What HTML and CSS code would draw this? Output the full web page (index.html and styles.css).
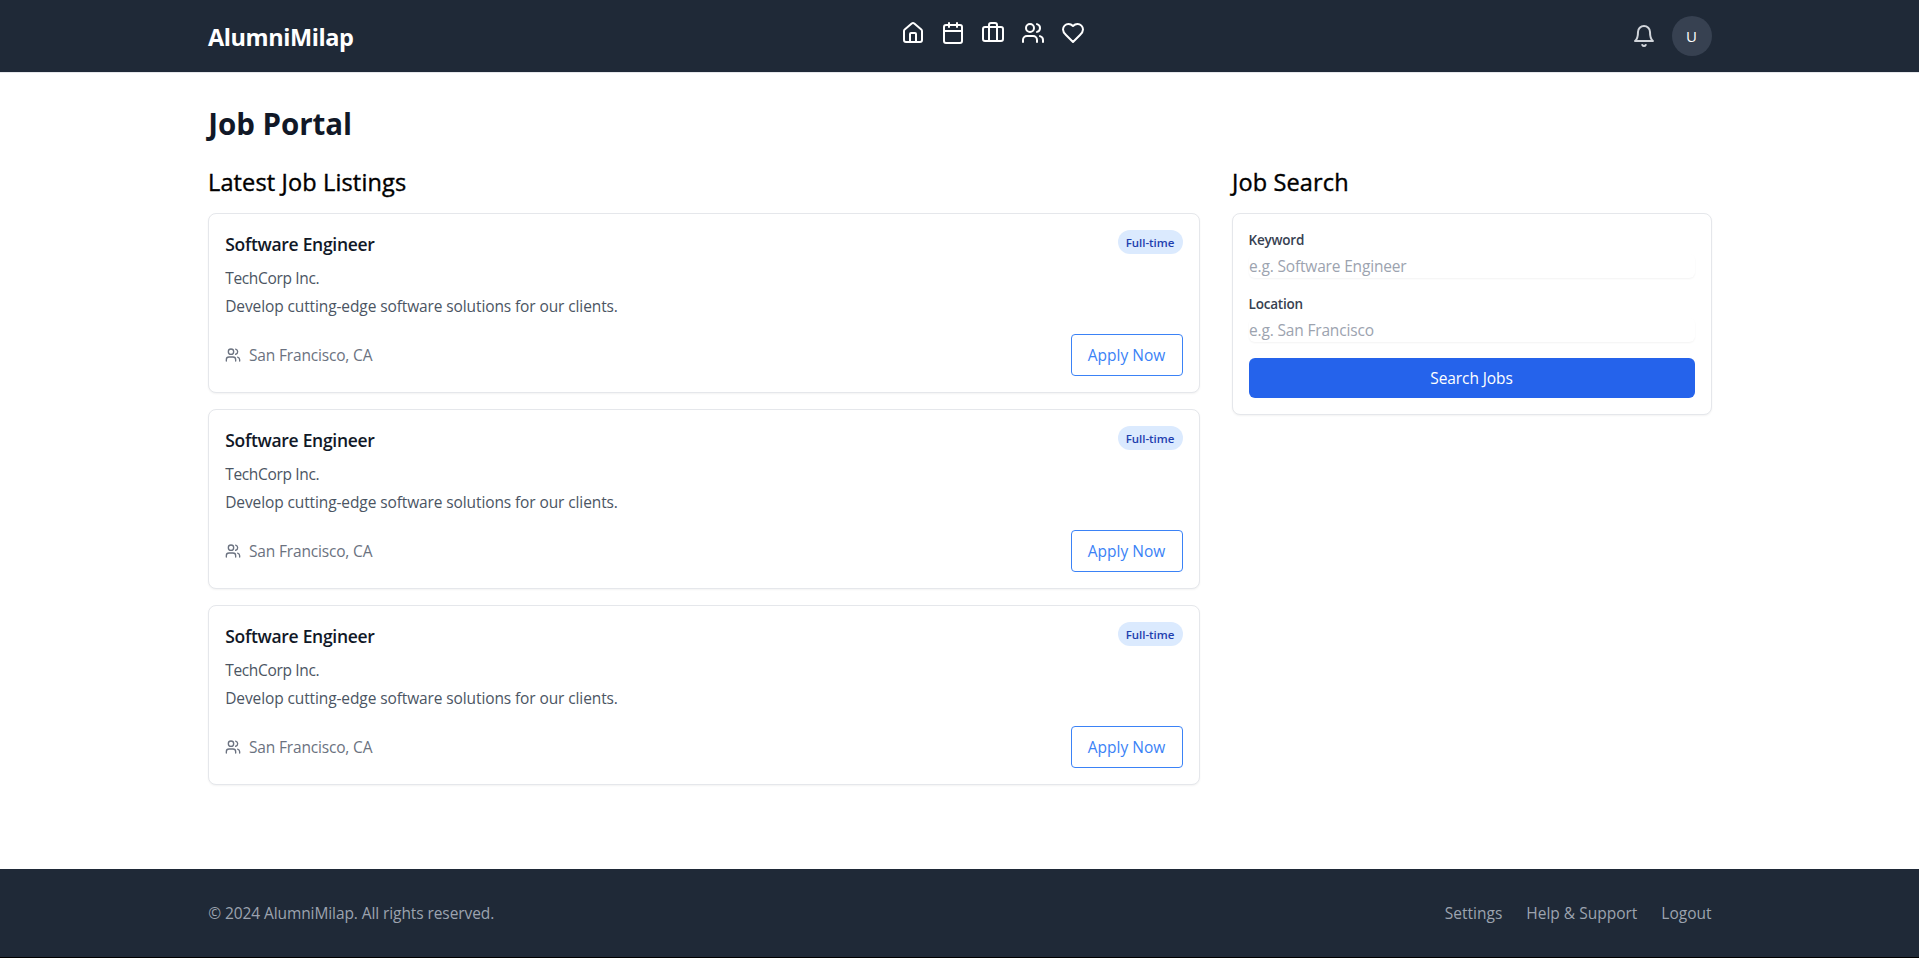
FILE: index.html
```html
<!DOCTYPE html>
<html lang="en">
<head>
<meta charset="utf-8">
<title>AlumniMilap – Job Portal</title>
<link rel="stylesheet" href="styles.css">
</head>
<body>
<svg class="sprite" aria-hidden="true">
  <symbol id="home" viewBox="0 0 24 24"><path d="M15 21v-8a1 1 0 0 0-1-1h-4a1 1 0 0 0-1 1v8"/><path d="M3 10a2 2 0 0 1 .709-1.528l7-5.999a2 2 0 0 1 2.582 0l7 5.999A2 2 0 0 1 21 10v9a2 2 0 0 1-2 2H5a2 2 0 0 1-2-2z"/></symbol>
  <symbol id="calendar" viewBox="0 0 24 24"><path d="M8 2v4M16 2v4M3 10h18"/><rect width="18" height="18" x="3" y="4" rx="2"/></symbol>
  <symbol id="briefcase" viewBox="0 0 24 24"><path d="M16 20V4a2 2 0 0 0-2-2h-4a2 2 0 0 0-2 2v16"/><rect width="20" height="14" x="2" y="6" rx="2"/></symbol>
  <symbol id="users" viewBox="0 0 24 24"><path d="M16 21v-2a4 4 0 0 0-4-4H6a4 4 0 0 0-4 4v2"/><circle cx="9" cy="7" r="4"/><path d="M22 21v-2a4 4 0 0 0-3-3.87M16 3.13a4 4 0 0 1 0 7.75"/></symbol>
  <symbol id="heart" viewBox="0 0 24 24"><path d="M19 14c1.49-1.46 3-3.21 3-5.5A5.5 5.5 0 0 0 16.5 3c-1.76 0-3 .5-4.5 2-1.5-1.5-2.74-2-4.5-2A5.5 5.5 0 0 0 2 8.5c0 2.3 1.5 4.05 3 5.5l7 7Z"/></symbol>
  <symbol id="bell" viewBox="0 0 24 24"><path d="M6 8a6 6 0 0 1 12 0c0 7 3 9 3 9H3s3-2 3-9"/><path d="M10.3 21a1.94 1.94 0 0 0 3.4 0"/></symbol>
</svg>
<header class="header">
  <div class="container header-row">
    <a class="brand">AlumniMilap</a>
    <nav class="nav">
      <a><svg class="icon"><use href="#home"/></svg></a>
      <a><svg class="icon"><use href="#calendar"/></svg></a>
      <a><svg class="icon"><use href="#briefcase"/></svg></a>
      <a><svg class="icon"><use href="#users"/></svg></a>
      <a><svg class="icon"><use href="#heart"/></svg></a>
    </nav>
    <div class="account">
      <svg class="icon bell"><use href="#bell"/></svg>
      <span class="avatar">U</span>
    </div>
  </div>
</header>
<main class="container main">
  <h1 class="page-title">Job Portal</h1>
  <div class="columns">
    <section class="listings">
      <h2 class="section-title">Latest Job Listings</h2>
      <div class="job-list">
        <article class="card">
          <div class="card-head"><h3 class="job-title">Software Engineer</h3><span class="badge">Full-time</span></div>
          <p class="company">TechCorp Inc.</p>
          <p class="description">Develop cutting-edge software solutions for our clients.</p>
          <div class="card-foot"><span class="location"><svg class="icon small"><use href="#users"/></svg><span>San Francisco, CA</span></span><button class="apply">Apply Now</button></div>
        </article>
        <article class="card">
          <div class="card-head"><h3 class="job-title">Software Engineer</h3><span class="badge">Full-time</span></div>
          <p class="company">TechCorp Inc.</p>
          <p class="description">Develop cutting-edge software solutions for our clients.</p>
          <div class="card-foot"><span class="location"><svg class="icon small"><use href="#users"/></svg><span>San Francisco, CA</span></span><button class="apply">Apply Now</button></div>
        </article>
        <article class="card">
          <div class="card-head"><h3 class="job-title">Software Engineer</h3><span class="badge">Full-time</span></div>
          <p class="company">TechCorp Inc.</p>
          <p class="description">Develop cutting-edge software solutions for our clients.</p>
          <div class="card-foot"><span class="location"><svg class="icon small"><use href="#users"/></svg><span>San Francisco, CA</span></span><button class="apply">Apply Now</button></div>
        </article>
      </div>
    </section>
    <aside>
      <h2 class="section-title search-title">Job Search</h2>
      <form class="card search">
        <div class="field"><label class="label" for="keyword">Keyword</label><input class="input" id="keyword" placeholder="e.g. Software Engineer"></div>
        <div class="field"><label class="label" for="place">Location</label><input class="input" id="place" placeholder="e.g. San Francisco"></div>
        <button class="submit" type="button">Search Jobs</button>
      </form>
    </aside>
  </div>
</main>
<footer class="footer">
  <div class="container footer-row">
    <p class="copyright">© 2024 AlumniMilap. All rights reserved.</p>
    <div class="links"><a>Settings</a><a>Help &amp; Support</a><a>Logout</a></div>
  </div>
</footer>
</body>
</html>
```
FILE: styles.css
```css
* { box-sizing: border-box; margin: 0; padding: 0; }
body {
  min-height: 958px;
  display: flex;
  flex-direction: column;
  background: #fff;
  color: #000;
  font: 400 15.5px/24px "Open Sans", "Noto Sans", sans-serif;
  letter-spacing: -0.2px;
  border-bottom: 1px solid #000;
}
button, input { font: inherit; letter-spacing: inherit; border: 0; background: none; }
.sprite { position: absolute; width: 0; height: 0; }
.container { width: 1504px; margin: 0 auto; }
.icon {
  display: block; width: 24px; height: 24px; flex: none;
  fill: none; stroke: currentColor; stroke-width: 2; stroke-linecap: round; stroke-linejoin: round;
}

.header { height: 73px; background: #1f2937; border-bottom: 1px solid #e5e7eb; color: #fff; }
.header-row { height: 72px; display: flex; align-items: center; justify-content: space-between; }
.brand { width: 146px; white-space: nowrap; font-size: 23.5px; line-height: 32px; font-weight: 700; letter-spacing: -0.42px; padding-top: 2px; text-indent: 0.5px; }
.nav { display: flex; gap: 16px; padding-bottom: 6px; }
.account { display: flex; align-items: center; gap: 16px; }
.bell { color: #d1d5db; }
.avatar { width: 40px; height: 40px; border-radius: 50%; background: #374151; display: flex; align-items: center; justify-content: center; font-size: 15px; letter-spacing: 0; }

.main { flex: 1; padding: 32px 0; }
.page-title { font-size: 29.5px; line-height: 36px; font-weight: 700; color: #111827; padding-top: 1px; margin-bottom: 23px; letter-spacing: -0.05px; text-indent: 0.8px; }
.columns { display: grid; grid-template-columns: 992px 480px; gap: 32px; align-items: start; }
.section-title { font-size: 23.5px; line-height: 32px; font-weight: 500; padding-top: 1px; margin-bottom: 15px; letter-spacing: 0.14px; text-indent: 0.5px; -webkit-text-stroke: 0.4px currentColor; }
.job-list { display: flex; flex-direction: column; gap: 16px; }
.card { border: 1px solid #e5e7eb; border-radius: 8px; padding: 16px; background: #fff; box-shadow: 0 1px 2px rgba(0, 0, 0, .05); }
.card-head { display: flex; justify-content: space-between; align-items: flex-start; margin-bottom: 8px; }
.job-title { font-size: 17.5px; line-height: 28px; font-weight: 600; color: #111827; letter-spacing: -0.3px; text-indent: 0.7px; }
.badge { width: 65px; height: 24px; border-radius: 12px; background: #dbeafe; color: #1e40af; font-size: 11.5px; line-height: 25px; letter-spacing: -0.05px; font-weight: 600; text-align: center; white-space: nowrap; }
.company, .description { color: #4b5563; text-indent: 0.7px; }
.company { letter-spacing: -0.33px; }
.description { margin-top: 4px; letter-spacing: -0.11px; }
.card-foot { display: flex; justify-content: space-between; align-items: center; margin-top: 16px; }
.location { display: flex; align-items: center; gap: 8px; color: #6b7280; text-indent: 0.5px; letter-spacing: -0.17px; }
.small { width: 16px; height: 16px; }
.apply { width: 112px; height: 42px; border: 1px solid #3b82f6; border-radius: 4px; color: #3b82f6; white-space: nowrap; letter-spacing: 0; }

.search { display: flex; flex-direction: column; gap: 16px; }
.label { display: block; font-size: 13.5px; line-height: 20px; font-weight: 600; color: #374151; margin-bottom: 4px; }
.input { display: block; width: 100%; height: 24px; border-radius: 6px; box-shadow: 0 1px 2px rgba(0, 0, 0, .05); letter-spacing: -0.17px; text-indent: 0.5px; }
.input::placeholder { color: #9ca3af; opacity: 1; }
.submit { height: 40px; border-radius: 6px; background: #2563eb; color: #fff; letter-spacing: -0.1px; }

.footer { background: #1f2937; color: #9ca3af; padding: 32px 0; }
.footer-row { display: flex; justify-content: space-between; align-items: center; }
.copyright { letter-spacing: -0.09px; text-indent: 0.7px; }
.links { display: flex; gap: 24px; letter-spacing: 0; }
```
